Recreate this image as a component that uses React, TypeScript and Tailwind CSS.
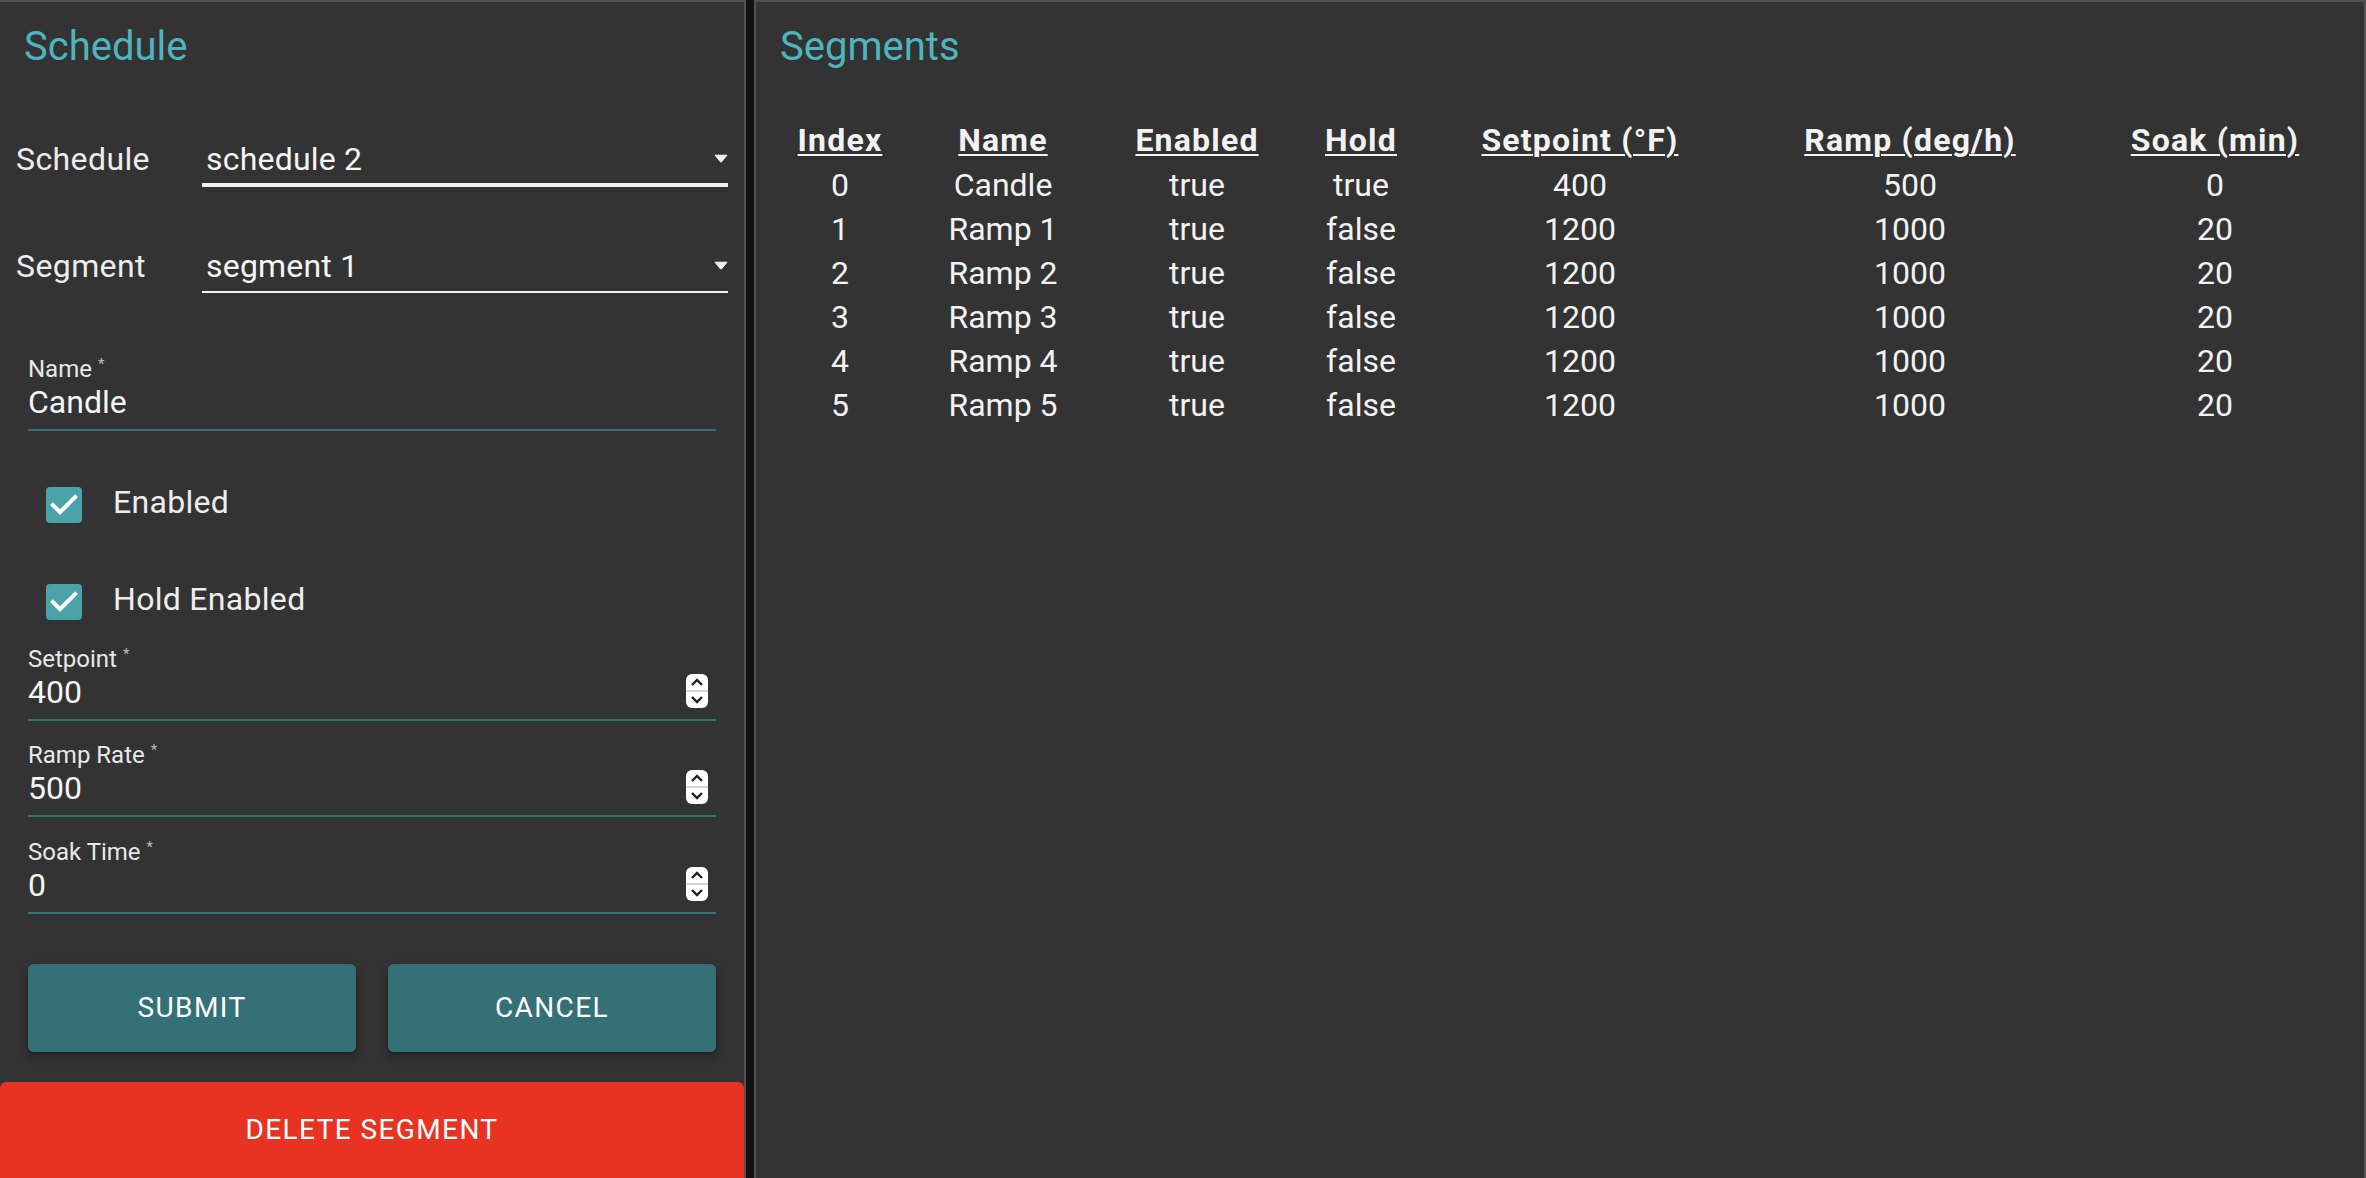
import React from "react";

const segments = [
  { index: 0, name: "Candle", enabled: "true", hold: "true", setpoint: 400, ramp: 500, soak: 0 },
  { index: 1, name: "Ramp 1", enabled: "true", hold: "false", setpoint: 1200, ramp: 1000, soak: 20 },
  { index: 2, name: "Ramp 2", enabled: "true", hold: "false", setpoint: 1200, ramp: 1000, soak: 20 },
  { index: 3, name: "Ramp 3", enabled: "true", hold: "false", setpoint: 1200, ramp: 1000, soak: 20 },
  { index: 4, name: "Ramp 4", enabled: "true", hold: "false", setpoint: 1200, ramp: 1000, soak: 20 },
  { index: 5, name: "Ramp 5", enabled: "true", hold: "false", setpoint: 1200, ramp: 1000, soak: 20 },
];

const columns = [
  { label: "Index", width: "w-[140px]" },
  { label: "Name", width: "w-[186px]" },
  { label: "Enabled", width: "w-[202px]" },
  { label: "Hold", width: "w-[126px]" },
  { label: "Setpoint (°F)", width: "w-[312px]" },
  { label: "Ramp (deg/h)", width: "w-[348px]" },
  { label: "Soak (min)", width: "w-[262px]" },
];

const DropArrow = () => (
  <svg width="14" height="9" viewBox="0 0 14 9" className="mt-[18px] shrink-0">
    <path d="M1 1.2h12L7.6 7.8a.8.8 0 0 1-1.2 0z" fill="#f2f2f2" stroke="#f2f2f2" strokeWidth="1" strokeLinejoin="round" />
  </svg>
);

const SelectRow = ({ label, value, focused, className }: { label: string; value: string; focused?: boolean; className: string }) => (
  <div className={`flex items-baseline ${className}`}>
    <div className="w-[202px] shrink-0 pl-[16px] text-[32px] leading-[46px] tracking-[0.4px] text-[#ededed]">{label}</div>
    <div
      className={`flex-1 mr-[16px] flex items-start justify-between pl-[4px] border-[#f2f2f2] ${
        focused ? "h-[51px] border-b-4" : "h-[50px] border-b-2"
      }`}
    >
      <span className="text-[32px] leading-[46px] tracking-[0.2px] text-[#f5f5f5]">{value}</span>
      <DropArrow />
    </div>
  </div>
);

const Spinner = () => (
  <svg width="22" height="34" viewBox="0 0 22 34" className="mt-[3px] mr-[8px] shrink-0">
    <rect x="0" y="0" width="22" height="34" rx="6" fill="#ffffff" />
    <rect x="0" y="16" width="22" height="2" fill="#d4d4d4" />
    <path d="M6 11l5-5 5 5" fill="none" stroke="#222" strokeWidth="2.4" />
    <path d="M6 23l5 5 5-5" fill="none" stroke="#222" strokeWidth="2.4" />
  </svg>
);

const TextField = ({ label, value, number, className }: { label: string; value: string; number?: boolean; className: string }) => (
  <div className={`mx-[28px] ${className}`}>
    <div className="text-[24px] leading-[24px] text-[#e8e8e8]">
      {label} <span className="align-top text-[15px] leading-[15px] text-[#bdbdbd]">*</span>
    </div>
    <div className="flex h-[50px] items-start justify-between border-b-2 border-[#2f7479]">
      <span className="text-[32px] leading-[42px] text-[#f5f5f5]">{value}</span>
      {number && <Spinner />}
    </div>
  </div>
);

const CheckRow = ({ label, className }: { label: string; className: string }) => (
  <div className={`flex h-[84px] items-center ${className}`}>
    <svg width="48" height="48" viewBox="0 0 24 24" className="ml-[40px] shrink-0">
      <rect x="3" y="3" width="18" height="18" rx="2" fill="#4aa3a8" />
      <path d="M10 17l-5-5 1.41-1.41L10 14.17l7.59-7.59L19 8l-9 9z" fill="#ffffff" />
    </svg>
    <span className="ml-[25px] mb-[6px] text-[32px] leading-[46px] tracking-[0.3px] text-[#ededed]">{label}</span>
  </div>
);

const ActionButton = ({ children }: { children: React.ReactNode }) => (
  <button className="flex-1 h-[88px] rounded-[6px] bg-[#357077] text-[28px] font-normal tracking-[1.4px] text-white shadow-[0_4px_10px_rgba(0,0,0,0.35)]">
    {children}
  </button>
);

const App = () => {
  return (
    <div className="flex h-[1178px] gap-[8px] overflow-hidden bg-[#111111] font-['Roboto',sans-serif]">
      <div className="flex w-[746px] shrink-0 flex-col border-t-2 border-r-2 border-[#525252] bg-[#333333]">
        <h2 className="pl-6 pt-[21px] text-[40px] leading-[48px] text-[#4eb5bf]">Schedule</h2>
        <SelectRow label="Schedule" value="schedule 2" focused className="mt-[65px]" />
        <SelectRow label="Segment" value="segment 1" className="mt-[56px]" />
        <TextField label="Name" value="Candle" className="mt-[64px]" />
        <CheckRow label="Enabled" className="mt-[32px]" />
        <CheckRow label="Hold Enabled" className="mt-[13px]" />
        <TextField label="Setpoint" value="400" number className="mt-[3px]" />
        <TextField label="Ramp Rate" value="500" number className="mt-[22px]" />
        <TextField label="Soak Time" value="0" number className="mt-[23px]" />
        <div className="mx-[28px] mt-[50px] flex gap-[32px]">
          <ActionButton>SUBMIT</ActionButton>
          <ActionButton>CANCEL</ActionButton>
        </div>
        <button className="mt-[30px] h-[96px] w-full shrink-0 rounded-t-[6px] bg-[#e83322] text-[28px] font-normal tracking-[1.4px] text-white">
          DELETE SEGMENT
        </button>
      </div>

      <div className="flex-1 border-t-2 border-x-2 border-[#525252] bg-[#333333]">
        <h2 className="pl-6 pt-[21px] text-[40px] leading-[48px] text-[#4eb5bf]">Segments</h2>
        <div className="mt-[46px] pl-[14px]">
          <table className="w-[1576px] table-fixed border-collapse text-center text-[32px] text-[#f2f2f2]">
            <thead>
              <tr>
                {columns.map((col) => (
                  <th key={col.label} className={`${col.width} p-0 leading-[46px] font-bold tracking-[1.2px]`}>
                    <span className="underline decoration-2 underline-offset-[3px]">{col.label}</span>
                  </th>
                ))}
              </tr>
            </thead>
            <tbody>
              {segments.map((s) => (
                <tr key={s.index} className="leading-[44px]">
                  <td className="p-0">{s.index}</td>
                  <td className="p-0">{s.name}</td>
                  <td className="p-0">{s.enabled}</td>
                  <td className="p-0">{s.hold}</td>
                  <td className="p-0">{s.setpoint}</td>
                  <td className="p-0">{s.ramp}</td>
                  <td className="p-0">{s.soak}</td>
                </tr>
              ))}
            </tbody>
          </table>
        </div>
      </div>
    </div>
  );
};

export default App;
